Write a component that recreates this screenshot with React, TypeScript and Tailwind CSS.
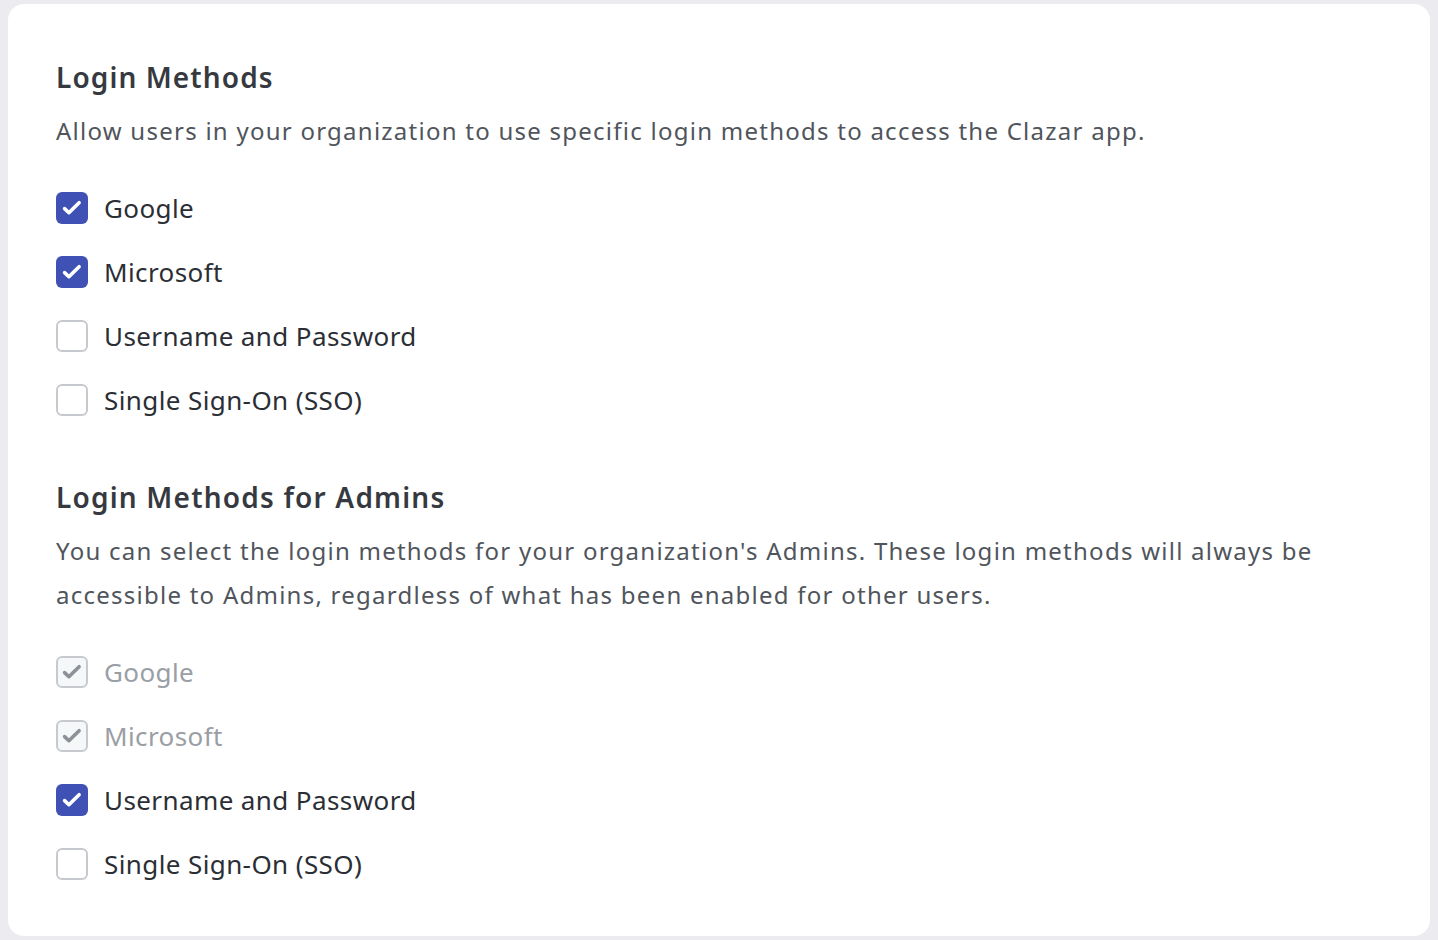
const Check = ({ color }: { color: string }) => (
  <svg viewBox="0 0 32 32" className="w-8 h-8" fill="none">
    <path d="M8.6 16.6l4.3 4.1 10.2-10" stroke={color} strokeWidth="3.6" strokeLinecap="round" strokeLinejoin="round" />
  </svg>
);

type Item = { label: string; state: "on" | "off" | "locked" };

const Box = ({ state }: { state: Item["state"] }) => {
  if (state === "on")
    return (
      <span className="w-8 h-8 rounded-md bg-[#3f51b5] flex items-center justify-center shrink-0">
        <Check color="#ffffff" />
      </span>
    );
  if (state === "locked")
    return (
      <span className="w-8 h-8 rounded-md border-2 border-[#c6cacf] bg-[#f6f7f8] flex items-center justify-center shrink-0 overflow-hidden">
        <span className="-m-[2px] flex">
          <Check color="#8d9298" />
        </span>
      </span>
    );
  return <span className="w-8 h-8 rounded-md border-2 border-[#c6cacf] bg-white shrink-0" />;
};

const Row = ({ item }: { item: Item }) => (
  <label className="flex items-center gap-4 h-8">
    <Box state={item.state} />
    <span
      className={`text-[26px] leading-8 tracking-[0.4px] ${
        item.state === "locked" ? "text-[#9a9ea5]" : "text-[#2b2f35]"
      }`}
    >
      {item.label}
    </span>
  </label>
);

const userMethods: Item[] = [
  { label: "Google", state: "on" },
  { label: "Microsoft", state: "on" },
  { label: "Username and Password", state: "off" },
  { label: "Single Sign-On (SSO)", state: "off" },
];

const adminMethods: Item[] = [
  { label: "Google", state: "locked" },
  { label: "Microsoft", state: "locked" },
  { label: "Username and Password", state: "on" },
  { label: "Single Sign-On (SSO)", state: "off" },
];

export default function App() {
  return (
    <main className="min-h-screen bg-[#ececf0] pt-1 px-2 pb-1 font-['Noto_Sans','Lato',sans-serif]">
      <div className="bg-white rounded-2xl px-12 pt-[55px] pb-[56px]">
        <h2 className="text-[28px] leading-9 font-semibold tracking-[1.1px] text-[#363a40]">Login Methods</h2>
        <p className="mt-[14px] text-[24px] leading-[44px] tracking-[1.25px] text-[#50555c]">
          Allow users in your organization to use specific login methods to access the Clazar app.
        </p>
        <div className="mt-[39px] flex flex-col gap-8">
          {userMethods.map((m) => (
            <Row key={m.label} item={m} />
          ))}
        </div>

        <h2 className="mt-[63px] text-[28px] leading-9 font-semibold tracking-[1.2px] text-[#363a40]">
          Login Methods for Admins
        </h2>
        <p className="mt-[14px] text-[24px] leading-[44px] tracking-[1.25px] text-[#50555c] max-w-[1290px]">
          You can select the login methods for your organization's Admins. These login methods will always be
          accessible to Admins, regardless of what has been enabled for other users.
        </p>
        <div className="mt-[39px] flex flex-col gap-8">
          {adminMethods.map((m) => (
            <Row key={m.label} item={m} />
          ))}
        </div>
      </div>
    </main>
  );
}
